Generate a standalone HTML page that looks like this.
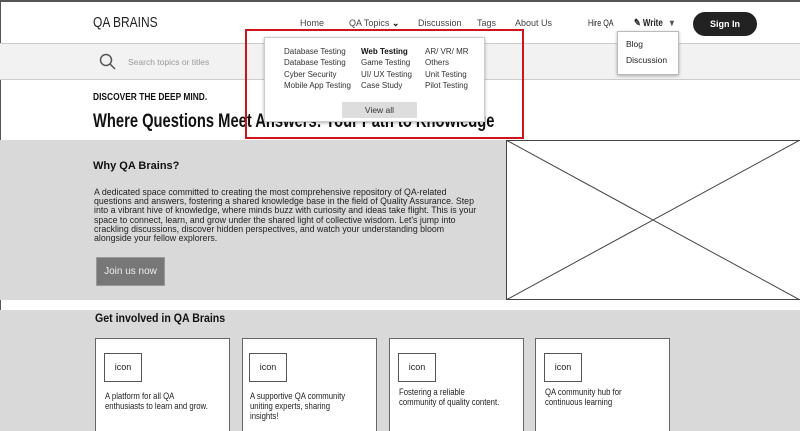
<!DOCTYPE html>
<html><head><style>
*{margin:0;padding:0;box-sizing:border-box}
html,body{width:800px;height:431px;overflow:hidden}
body{background:#fff;font-family:"Liberation Sans",sans-serif;color:#222;position:relative}
.a{position:absolute}
.nav{font-size:9px;color:#444;top:18px}
.dd div{position:absolute;font-size:8px;color:#333}
.card{position:absolute;top:338px;width:135px;height:100px;background:#fff;border:1px solid #666}
.card .ic{position:absolute;left:8px;top:14px;width:38px;height:29px;border:1px solid #555;font-size:9px;text-align:center;line-height:27px}
.card p{position:absolute;left:9px;top:52px;font-size:8.8px;line-height:10px;color:#222;width:128px;transform:scaleX(.88);transform-origin:0 0}
.n{transform:scaleX(.8);transform-origin:0 0;white-space:nowrap}
</style></head><body>
<div class="a" style="left:0;top:0;width:800px;height:2px;background:#555"></div>
<div class="a" style="left:0;top:0;width:1px;height:431px;background:#555"></div>
<div class="a n" style="left:93px;top:14px;font-size:15px;color:#222">QA BRAINS</div>
<div class="a nav" style="left:300px">Home</div>
<div class="a nav" style="left:349px">QA Topics <b style="color:#111">&#8964;</b></div>
<div class="a nav" style="left:418px">Discussion</div>
<div class="a nav" style="left:477px">Tags</div>
<div class="a nav" style="left:515px">About Us</div>
<div class="a nav n" style="left:588px;color:#222;font-size:9px;top:18px">Hire QA</div>
<div class="a nav n" style="left:634px;color:#222;font-weight:bold;top:18px;font-size:10px">✎ Write <span style="color:#555;margin-left:6px">▾</span></div>
<div class="a" style="left:693px;top:12px;width:64px;height:24px;border-radius:12px;background:#222;color:#fff;font-size:9px;font-weight:bold;text-align:center;line-height:24px">Sign In</div>
<div class="a" style="left:0;top:43px;width:800px;height:37px;background:#f2f2f2;border-top:1px solid #ccc;border-bottom:1px solid #ccc"></div>
<svg class="a" style="left:99px;top:53px" width="18" height="18"><circle cx="7" cy="7" r="5.5" fill="none" stroke="#555" stroke-width="1.5"/><line x1="11" y1="11" x2="16" y2="16" stroke="#555" stroke-width="1.5"/></svg>
<div class="a" style="left:128px;top:57px;font-size:8.5px;color:#999">Search topics or titles</div>
<div class="a n" style="left:93px;top:91px;font-size:10.5px;font-weight:bold;color:#111">DISCOVER THE DEEP MIND.</div>
<div class="a" style="left:93px;top:111px;font-size:19px;font-weight:bold;color:#111;white-space:nowrap;transform:scaleX(.775);transform-origin:0 0">Where Questions Meet Answers: Your Path to Knowledge</div>
<div class="a" style="left:0;top:140px;width:800px;height:160px;background:#d9d9d9"></div>
<div class="a" style="left:93px;top:160px;font-size:11px;font-weight:bold;color:#111">Why QA Brains?</div>
<div class="a" style="left:94px;top:188px;width:390px;font-size:8.8px;line-height:9.2px;color:#222">A dedicated space committed to creating the most comprehensive repository of QA-related questions and answers, fostering a shared knowledge base in the field of Quality Assurance. Step into a vibrant hive of knowledge, where minds buzz with curiosity and ideas take flight. This is your space to connect, learn, and grow under the shared light of collective wisdom. Let's jump into crackling discussions, discover hidden perspectives, and watch your understanding bloom alongside your fellow explorers.</div>
<div class="a" style="left:96px;top:257px;width:69px;height:29px;background:#777;border:1px solid #999;color:#eee;font-size:10px;text-align:center;line-height:27px">Join us now</div>
<svg class="a" style="left:506px;top:140px" width="294" height="160"><rect x="0.5" y="0.5" width="300" height="159" fill="#fff" stroke="#444"/><line x1="0" y1="0" x2="294" y2="160" stroke="#444"/><line x1="0" y1="160" x2="294" y2="0" stroke="#444"/></svg>
<div class="a" style="left:0;top:310px;width:800px;height:121px;background:#d9d9d9"></div>
<div class="a" style="left:95px;top:313px;font-size:11.5px;font-weight:bold;color:#111;white-space:nowrap;transform:scaleX(.92);transform-origin:0 0">Get involved in QA Brains</div>
<div class="card" style="left:95px"><div class="ic">icon</div><p>A platform for all QA<br>enthusiasts to learn and grow.</p></div>
<div class="card" style="left:242px"><div class="ic" style="left:6px">icon</div><p style="left:7px">A supportive QA community<br>uniting experts, sharing<br>insights!</p></div>
<div class="card" style="left:389px"><div class="ic">icon</div><p style="top:48px">Fostering a reliable<br>community of quality content.</p></div>
<div class="card" style="left:535px"><div class="ic">icon</div><p style="top:48px">QA community hub for<br>continuous learning</p></div>
<div class="a dd" style="left:264px;top:37px;width:221px;height:85px;background:#fff;border:1px solid #ccc;box-shadow:0 1px 3px rgba(0,0,0,.3)">
<div style="left:19px;top:9px">Database Testing</div><div style="left:19px;top:20px">Database Testing</div><div style="left:19px;top:32px">Cyber Security</div><div style="left:19px;top:43px">Mobile App Testing</div>
<div style="left:96px;top:9px;font-weight:bold;color:#111">Web Testing</div><div style="left:96px;top:20px">Game Testing</div><div style="left:96px;top:32px">UI/ UX Testing</div><div style="left:96px;top:43px">Case Study</div>
<div style="left:160px;top:9px">AR/ VR/ MR</div><div style="left:160px;top:20px">Others</div><div style="left:160px;top:32px">Unit Testing</div><div style="left:160px;top:43px">Pilot Testing</div>
<div style="left:77px;top:64px;width:75px;height:16px;background:#ddd;text-align:center;line-height:16px;font-size:8.5px">View all</div>
</div>
<div class="a" style="left:245px;top:29px;width:279px;height:110px;border:2px solid #d0141c"></div>
<div class="a" style="left:617px;top:31px;width:62px;height:44px;background:#fff;border:1px solid #bbb;box-shadow:0 1px 3px rgba(0,0,0,.3);font-size:8.5px;color:#222">
<div style="position:absolute;left:8px;top:7px">Blog</div><div style="position:absolute;left:8px;top:23px">Discussion</div></div>
</body></html>
